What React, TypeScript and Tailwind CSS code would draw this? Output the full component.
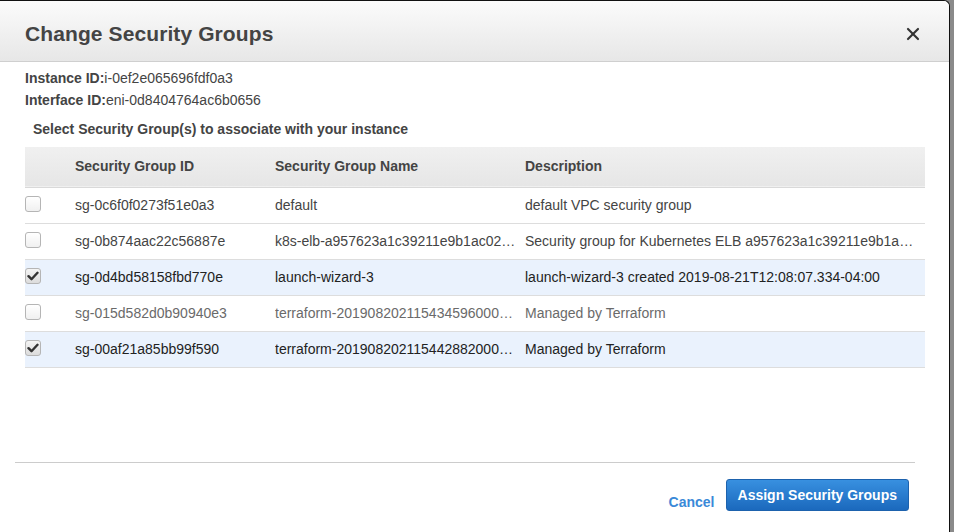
import { X } from 'lucide-react';

interface Group {
  id: string;
  name: string;
  description: string;
  checked: boolean;
  muted?: boolean;
}

const groups: Group[] = [
  { id: 'sg-0c6f0f0273f51e0a3', name: 'default', description: 'default VPC security group', checked: false },
  {
    id: 'sg-0b874aac22c56887e',
    name: 'k8s-elb-a957623a1c39211e9b1ac02a6f3c1b9d',
    description: 'Security group for Kubernetes ELB a957623a1c39211e9b1ac02a6f3c1b9d (default/web)',
    checked: false,
  },
  {
    id: 'sg-0d4bd58158fbd770e',
    name: 'launch-wizard-3',
    description: 'launch-wizard-3 created 2019-08-21T12:08:07.334-04:00',
    checked: true,
  },
  {
    id: 'sg-015d582d0b90940e3',
    name: 'terraform-20190820211543459600000001',
    description: 'Managed by Terraform',
    checked: false,
    muted: true,
  },
  {
    id: 'sg-00af21a85bb99f590',
    name: 'terraform-20190820211544288200000002',
    description: 'Managed by Terraform',
    checked: true,
  },
];

function Checkbox({ checked }: { checked: boolean }) {
  return (
    <div
      className={`w-[16px] h-[16px] rounded-[3px] border border-[#b5b5b5] flex items-center justify-center
                  ${checked ? 'bg-gradient-to-b from-[#f4f4f4] to-[#dcdcdc]' : 'bg-gradient-to-b from-white to-[#f0f0f0]'}`}
    >
      {checked && (
        <svg width="12" height="10" viewBox="0 0 12 10">
          <path d="M1.5 5.2 L4.5 8.2 L10.5 1.8" fill="none" stroke="#333" strokeWidth="2.4" strokeLinecap="round" strokeLinejoin="round" />
        </svg>
      )}
    </div>
  );
}

export default function App() {
  return (
    <div className="w-[954px] h-[532px] bg-[#8a8a8a] flex font-['Liberation_Sans',Arial,sans-serif] text-[14px] text-[#444]">
      <div className="w-[950px] h-[532px] bg-white border-t border-r border-[#111] rounded-tr-[6px] flex flex-col">
        {/* Header */}
        <div className="h-[61px] shrink-0 flex items-center justify-between pl-[25px] pr-[26px] pt-[6px] rounded-tr-[6px]
                        bg-gradient-to-b from-[#fbfbfb] to-[#e7e7e7] border-b border-[#cfcfcf]">
          <h1 className="text-[21px] font-bold text-[#444] tracking-[0.1px]">Change Security Groups</h1>
          <X className="w-[20px] h-[20px] text-[#333]" strokeWidth={2.6} />
        </div>

        {/* Body */}
        <div className="px-[25px] pt-[5px] flex-1">
          <div className="leading-[22px] text-[#444]">
            <div>
              <span className="font-bold">Instance ID:</span>i-0ef2e065696fdf0a3
            </div>
            <div>
              <span className="font-bold">Interface ID:</span>eni-0d8404764ac6b0656
            </div>
          </div>
          <div className="mt-[7px] pl-[8px] font-bold text-[#444] leading-[22px]">
            Select Security Group(s) to associate with your instance
          </div>

          <table className="mt-[7px] w-[900px] table-fixed border-collapse">
            <colgroup>
              <col className="w-[50px]" />
              <col className="w-[200px]" />
              <col className="w-[250px]" />
              <col className="w-[400px]" />
            </colgroup>
            <thead>
              <tr className="h-[40px] bg-gradient-to-b from-[#f0f0f0] to-[#e6e6e6] border-b border-[#d9d9d9]">
                <th />
                <th className="text-left font-bold text-[#444]">Security Group ID</th>
                <th className="text-left font-bold text-[#444]">Security Group Name</th>
                <th className="text-left font-bold text-[#444]">Description</th>
              </tr>
            </thead>
            <tbody>
              {groups.map((g) => (
                <tr
                  key={g.id}
                  className={`h-[36px] border-b border-[#dddddd] ${g.checked ? 'bg-[#eaf2fd] text-[#222]' : 'bg-white'}
                              ${g.muted ? 'text-[#6a6a6a]' : g.checked ? '' : 'text-[#444]'}`}
                >
                  <td className="align-top pt-[8px]">
                    <Checkbox checked={g.checked} />
                  </td>
                  <td className="truncate">{g.id}</td>
                  <td className="truncate pr-[5px]">{g.name}</td>
                  <td className="truncate pr-[5px]">{g.description}</td>
                </tr>
              ))}
            </tbody>
          </table>
        </div>

        {/* Footer */}
        <div className="mx-[15px] w-[900px] border-t border-[#cccccc] h-[70px] shrink-0 flex items-start justify-end pt-[16px] gap-[11px]">
          <button className="mt-[13px] font-bold text-[#3a89d8] text-[14px]">Cancel</button>
          <button
            className="mr-[6px] h-[32px] px-[11px] rounded-[3px] border border-[#1d62ad] text-white font-bold text-[14px]
                       bg-gradient-to-b from-[#3890e0] to-[#1b69bd]"
          >
            Assign Security Groups
          </button>
        </div>
      </div>
    </div>
  );
}
